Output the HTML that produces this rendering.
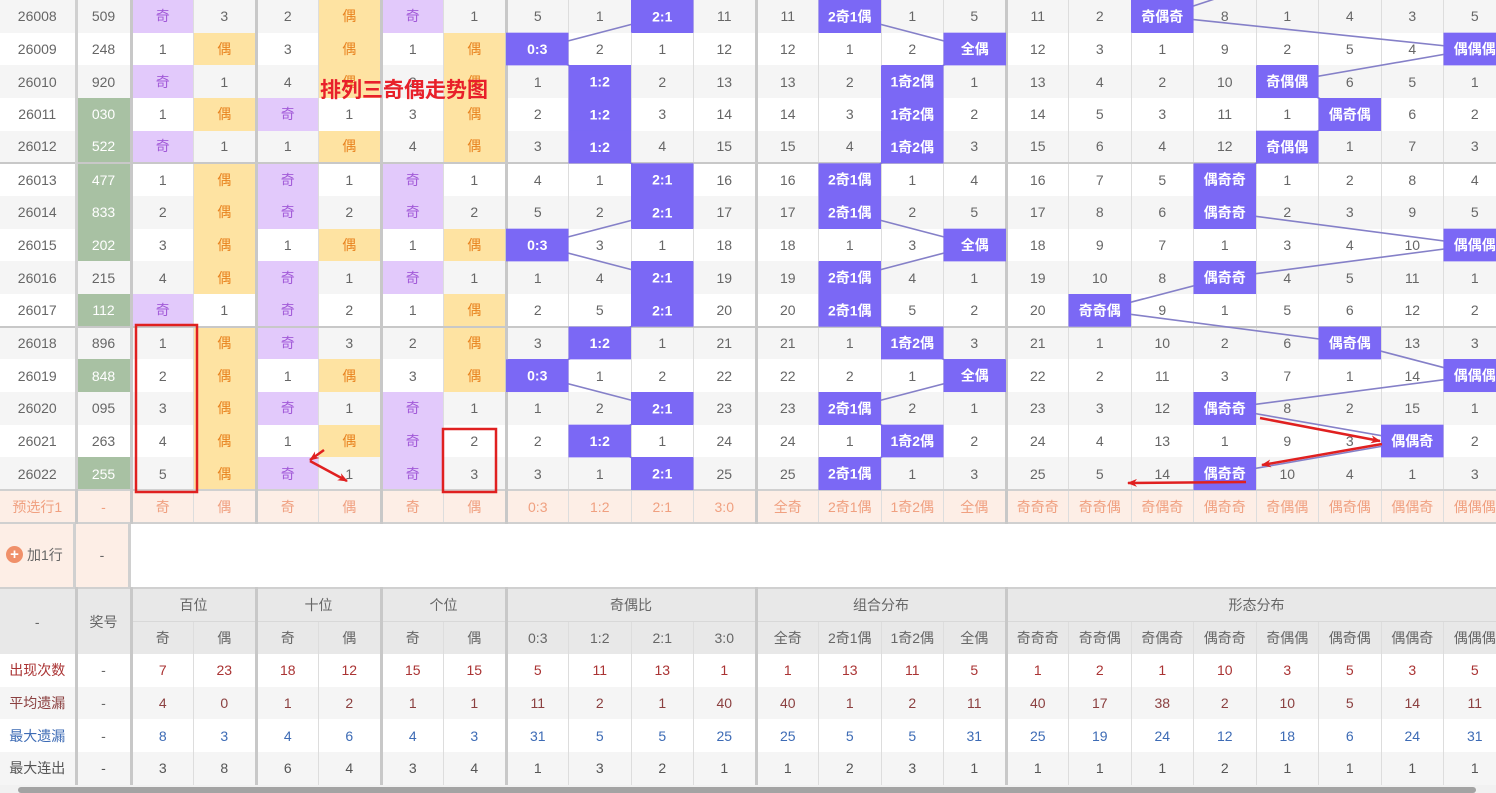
<!DOCTYPE html>
<html><head><meta charset="utf-8">
<style>
*{margin:0;padding:0;box-sizing:border-box}
body{width:1496px;height:793px;overflow:hidden;background:#fff;font-family:"Liberation Sans","Noto Sans CJK SC",sans-serif;position:relative}
table{border-collapse:collapse;table-layout:fixed;width:1506px;position:absolute;left:0}
td{text-align:center;font-size:14px;color:#666;border-right:1px solid #ddd;overflow:hidden;white-space:nowrap;padding:0}
#m tr{height:32.67px}
#m tr:nth-child(odd) td{background:#f5f5f5}
#m tr:nth-child(even) td{background:#fff}
#m td:nth-child(1),#m td:nth-child(2){border-right:3px solid #c8c8c8}
#m td:nth-child(1){border-right:3px solid #d0d0d0}
#m td:nth-child(4),#m td:nth-child(6),#m td:nth-child(8),#m td:nth-child(12),#m td:nth-child(16){border-right:3px solid #c8c8c8}
#m tr.s td{border-top:2px solid #c8c8c8}
#m td.q{background:#e2c9fb !important;color:#a25ad8}
#m td.o{background:#fee3a2 !important;color:#e8821e}
#m td.g{background:#a8c1a3 !important;color:#fff}
#m td.b{background:#7b68f5 !important}
.sep{border-right:3px solid #c8c8c8 !important}
#p tr{height:33px}
#p td{background:#fdeee6;color:#f0a080;border-top:2px solid #d0d0d0;border-bottom:2px solid #d0d0d0}
#h td{background:#e8e8e8;color:#666;height:33.5px;border-bottom:1px solid #d8d8d8}
#st tr{height:32.7px}
.r1 td{background:#fff;color:#a33}
.r2 td{background:#f5f5f5;color:#8b4040}
.r3 td{background:#fff;color:#3d6bb5}
.r4 td{background:#f5f5f5;color:#555}
</style></head><body>
<table id="m"><colgroup><col style="width:76px"><col style="width:55px"><col span="22" style="width:62.5px"></colgroup>
<tr><td>26008</td><td>509</td><td class="q">奇</td><td>3</td><td>2</td><td class="o">偶</td><td class="q">奇</td><td>1</td><td>5</td><td>1</td><td class="b"></td><td>11</td><td>11</td><td class="b"></td><td>1</td><td>5</td><td>11</td><td>2</td><td class="b"></td><td>8</td><td>1</td><td>4</td><td>3</td><td>5</td></tr>
<tr><td>26009</td><td>248</td><td>1</td><td class="o">偶</td><td>3</td><td class="o">偶</td><td>1</td><td class="o">偶</td><td class="b"></td><td>2</td><td>1</td><td>12</td><td>12</td><td>1</td><td>2</td><td class="b"></td><td>12</td><td>3</td><td>1</td><td>9</td><td>2</td><td>5</td><td>4</td><td class="b"></td></tr>
<tr><td>26010</td><td>920</td><td class="q">奇</td><td>1</td><td>4</td><td class="o">偶</td><td>2</td><td class="o">偶</td><td>1</td><td class="b"></td><td>2</td><td>13</td><td>13</td><td>2</td><td class="b"></td><td>1</td><td>13</td><td>4</td><td>2</td><td>10</td><td class="b"></td><td>6</td><td>5</td><td>1</td></tr>
<tr><td>26011</td><td class="g">030</td><td>1</td><td class="o">偶</td><td class="q">奇</td><td>1</td><td>3</td><td class="o">偶</td><td>2</td><td class="b"></td><td>3</td><td>14</td><td>14</td><td>3</td><td class="b"></td><td>2</td><td>14</td><td>5</td><td>3</td><td>11</td><td>1</td><td class="b"></td><td>6</td><td>2</td></tr>
<tr><td>26012</td><td class="g">522</td><td class="q">奇</td><td>1</td><td>1</td><td class="o">偶</td><td>4</td><td class="o">偶</td><td>3</td><td class="b"></td><td>4</td><td>15</td><td>15</td><td>4</td><td class="b"></td><td>3</td><td>15</td><td>6</td><td>4</td><td>12</td><td class="b"></td><td>1</td><td>7</td><td>3</td></tr>
<tr class="s"><td>26013</td><td class="g">477</td><td>1</td><td class="o">偶</td><td class="q">奇</td><td>1</td><td class="q">奇</td><td>1</td><td>4</td><td>1</td><td class="b"></td><td>16</td><td>16</td><td class="b"></td><td>1</td><td>4</td><td>16</td><td>7</td><td>5</td><td class="b"></td><td>1</td><td>2</td><td>8</td><td>4</td></tr>
<tr><td>26014</td><td class="g">833</td><td>2</td><td class="o">偶</td><td class="q">奇</td><td>2</td><td class="q">奇</td><td>2</td><td>5</td><td>2</td><td class="b"></td><td>17</td><td>17</td><td class="b"></td><td>2</td><td>5</td><td>17</td><td>8</td><td>6</td><td class="b"></td><td>2</td><td>3</td><td>9</td><td>5</td></tr>
<tr><td>26015</td><td class="g">202</td><td>3</td><td class="o">偶</td><td>1</td><td class="o">偶</td><td>1</td><td class="o">偶</td><td class="b"></td><td>3</td><td>1</td><td>18</td><td>18</td><td>1</td><td>3</td><td class="b"></td><td>18</td><td>9</td><td>7</td><td>1</td><td>3</td><td>4</td><td>10</td><td class="b"></td></tr>
<tr><td>26016</td><td>215</td><td>4</td><td class="o">偶</td><td class="q">奇</td><td>1</td><td class="q">奇</td><td>1</td><td>1</td><td>4</td><td class="b"></td><td>19</td><td>19</td><td class="b"></td><td>4</td><td>1</td><td>19</td><td>10</td><td>8</td><td class="b"></td><td>4</td><td>5</td><td>11</td><td>1</td></tr>
<tr><td>26017</td><td class="g">112</td><td class="q">奇</td><td>1</td><td class="q">奇</td><td>2</td><td>1</td><td class="o">偶</td><td>2</td><td>5</td><td class="b"></td><td>20</td><td>20</td><td class="b"></td><td>5</td><td>2</td><td>20</td><td class="b"></td><td>9</td><td>1</td><td>5</td><td>6</td><td>12</td><td>2</td></tr>
<tr class="s"><td>26018</td><td>896</td><td>1</td><td class="o">偶</td><td class="q">奇</td><td>3</td><td>2</td><td class="o">偶</td><td>3</td><td class="b"></td><td>1</td><td>21</td><td>21</td><td>1</td><td class="b"></td><td>3</td><td>21</td><td>1</td><td>10</td><td>2</td><td>6</td><td class="b"></td><td>13</td><td>3</td></tr>
<tr><td>26019</td><td class="g">848</td><td>2</td><td class="o">偶</td><td>1</td><td class="o">偶</td><td>3</td><td class="o">偶</td><td class="b"></td><td>1</td><td>2</td><td>22</td><td>22</td><td>2</td><td>1</td><td class="b"></td><td>22</td><td>2</td><td>11</td><td>3</td><td>7</td><td>1</td><td>14</td><td class="b"></td></tr>
<tr><td>26020</td><td>095</td><td>3</td><td class="o">偶</td><td class="q">奇</td><td>1</td><td class="q">奇</td><td>1</td><td>1</td><td>2</td><td class="b"></td><td>23</td><td>23</td><td class="b"></td><td>2</td><td>1</td><td>23</td><td>3</td><td>12</td><td class="b"></td><td>8</td><td>2</td><td>15</td><td>1</td></tr>
<tr><td>26021</td><td>263</td><td>4</td><td class="o">偶</td><td>1</td><td class="o">偶</td><td class="q">奇</td><td>2</td><td>2</td><td class="b"></td><td>1</td><td>24</td><td>24</td><td>1</td><td class="b"></td><td>2</td><td>24</td><td>4</td><td>13</td><td>1</td><td>9</td><td>3</td><td class="b"></td><td>2</td></tr>
<tr><td>26022</td><td class="g">255</td><td>5</td><td class="o">偶</td><td class="q">奇</td><td>1</td><td class="q">奇</td><td>3</td><td>3</td><td>1</td><td class="b"></td><td>25</td><td>25</td><td class="b"></td><td>1</td><td>3</td><td>25</td><td>5</td><td>14</td><td class="b"></td><td>10</td><td>4</td><td>1</td><td>3</td></tr>
</table>

<table id="p" style="top:489px"><colgroup><col style="width:76px"><col style="width:55px"><col span="22" style="width:62.5px"></colgroup>
<tr><td class="sep">预选行1</td><td class="sep">-</td><td>奇</td><td class="sep">偶</td><td>奇</td><td class="sep">偶</td><td>奇</td><td class="sep">偶</td><td>0:3</td><td>1:2</td><td>2:1</td><td class="sep">3:0</td><td>全奇</td><td>2奇1偶</td><td>1奇2偶</td><td class="sep">全偶</td><td>奇奇奇</td><td>奇奇偶</td><td>奇偶奇</td><td>偶奇奇</td><td>奇偶偶</td><td>偶奇偶</td><td>偶偶奇</td><td>偶偶偶</td></tr>
</table>

<div style="position:absolute;left:0;top:524px;width:76px;height:63px;background:#fdeee6;border-right:3px solid #d0d0d0;font-size:14px;color:#666;line-height:63px">
<span style="display:inline-block;width:17px;height:17px;border-radius:50%;background:#f0906a;color:#fff;font-size:15px;line-height:17px;text-align:center;font-weight:bold;vertical-align:middle;margin:-3px 4px 0 6px">+</span>加1行</div>
<div style="position:absolute;left:76px;top:524px;width:55px;height:63px;background:#fdeee6;border-right:3px solid #d0d0d0;font-size:14px;color:#666;line-height:63px;text-align:center">-</div>

<table id="h" style="top:587px;border-top:2px solid #d0d0d0"><colgroup><col style="width:76px"><col style="width:55px"><col span="22" style="width:62.5px"></colgroup>
<tr><td rowspan="2" class="sep">-</td><td rowspan="2" class="sep">奖号</td><td colspan="2" class="sep">百位</td><td colspan="2" class="sep">十位</td><td colspan="2" class="sep">个位</td><td colspan="4" class="sep">奇偶比</td><td colspan="4" class="sep">组合分布</td><td colspan="8">形态分布</td></tr>
<tr><td>奇</td><td class="sep">偶</td><td>奇</td><td class="sep">偶</td><td>奇</td><td class="sep">偶</td><td>0:3</td><td>1:2</td><td>2:1</td><td class="sep">3:0</td><td>全奇</td><td>2奇1偶</td><td>1奇2偶</td><td class="sep">全偶</td><td>奇奇奇</td><td>奇奇偶</td><td>奇偶奇</td><td>偶奇奇</td><td>奇偶偶</td><td>偶奇偶</td><td>偶偶奇</td><td>偶偶偶</td></tr>
</table>

<table id="st" style="top:654px"><colgroup><col style="width:76px"><col style="width:55px"><col span="22" style="width:62.5px"></colgroup>
<tr class="r1"><td class="sep">出现次数</td><td class="sep" style="color:#666">-</td><td>7</td><td class="sep">23</td><td>18</td><td class="sep">12</td><td>15</td><td class="sep">15</td><td>5</td><td>11</td><td>13</td><td class="sep">1</td><td>1</td><td>13</td><td>11</td><td class="sep">5</td><td>1</td><td>2</td><td>1</td><td>10</td><td>3</td><td>5</td><td>3</td><td>5</td></tr>
<tr class="r2"><td class="sep">平均遗漏</td><td class="sep" style="color:#666">-</td><td>4</td><td class="sep">0</td><td>1</td><td class="sep">2</td><td>1</td><td class="sep">1</td><td>11</td><td>2</td><td>1</td><td class="sep">40</td><td>40</td><td>1</td><td>2</td><td class="sep">11</td><td>40</td><td>17</td><td>38</td><td>2</td><td>10</td><td>5</td><td>14</td><td>11</td></tr>
<tr class="r3"><td class="sep">最大遗漏</td><td class="sep" style="color:#666">-</td><td>8</td><td class="sep">3</td><td>4</td><td class="sep">6</td><td>4</td><td class="sep">3</td><td>31</td><td>5</td><td>5</td><td class="sep">25</td><td>25</td><td>5</td><td>5</td><td class="sep">31</td><td>25</td><td>19</td><td>24</td><td>12</td><td>18</td><td>6</td><td>24</td><td>31</td></tr>
<tr class="r4"><td class="sep">最大连出</td><td class="sep">-</td><td>3</td><td class="sep">8</td><td>6</td><td class="sep">4</td><td>3</td><td class="sep">4</td><td>1</td><td>3</td><td>2</td><td class="sep">1</td><td>1</td><td>2</td><td>3</td><td class="sep">1</td><td>1</td><td>1</td><td>1</td><td>2</td><td>1</td><td>1</td><td>1</td><td>1</td></tr>
</table>

<div style="position:absolute;left:0;top:785px;width:1496px;height:8px;background:#f1f1f1"></div>
<div style="position:absolute;left:18px;top:787px;width:1458px;height:6px;background:#a3a3a3;border-radius:3px"></div>

<svg width="1496" height="793" style="position:absolute;left:0;top:0" font-family="Liberation Sans, Noto Sans CJK SC, sans-serif">
<defs><marker id="ar" markerWidth="10" markerHeight="8" refX="9" refY="4" orient="auto" markerUnits="userSpaceOnUse"><path d="M0,0 L10,4 L0,8 L3,4z" fill="#e02020"/></marker></defs>
<g fill="none" stroke="#8580c8" stroke-width="1.6">
<polyline points="662.25,16.3 537.25,49 599.75,81.6 599.75,114.3 599.75,147 662.25,179.6 662.25,212.3 537.25,245 662.25,277.7 662.25,310.3 599.75,343 537.25,375.7 662.25,408.3 599.75,441 662.25,473.7"/>
<polyline points="849.75,16.3 974.75,49 912.25,81.6 912.25,114.3 912.25,147 849.75,179.6 849.75,212.3 974.75,245 849.75,277.7 849.75,310.3 912.25,343 974.75,375.7 849.75,408.3 912.25,441 849.75,473.7"/>
<polyline points="1260,-16 1162.25,16.3 1474.75,49 1287.25,81.6 1349.75,114.3 1287.25,147 1224.75,179.6 1224.75,212.3 1474.75,245 1224.75,277.7 1099.75,310.3 1349.75,343 1474.75,375.7 1224.75,408.3 1412.25,441 1224.75,473.7"/>
</g>
<g fill="#7b68f5">
<rect x="631" y="0" width="62.5" height="32.7"/><rect x="506" y="32.67" width="62.5" height="32.7"/><rect x="568.5" y="65.33" width="62.5" height="32.7"/><rect x="568.5" y="98" width="62.5" height="32.7"/><rect x="568.5" y="130.67" width="62.5" height="32.7"/><rect x="631" y="163.33" width="62.5" height="32.7"/><rect x="631" y="196" width="62.5" height="32.7"/><rect x="506" y="228.67" width="62.5" height="32.7"/><rect x="631" y="261.33" width="62.5" height="32.7"/><rect x="631" y="294" width="62.5" height="32.7"/><rect x="568.5" y="326.67" width="62.5" height="32.7"/><rect x="506" y="359.33" width="62.5" height="32.7"/><rect x="631" y="392" width="62.5" height="32.7"/><rect x="568.5" y="424.67" width="62.5" height="32.7"/><rect x="631" y="457.33" width="62.5" height="32.7"/>
<rect x="818.5" y="0" width="62.5" height="32.7"/><rect x="943.5" y="32.67" width="62.5" height="32.7"/><rect x="881" y="65.33" width="62.5" height="32.7"/><rect x="881" y="98" width="62.5" height="32.7"/><rect x="881" y="130.67" width="62.5" height="32.7"/><rect x="818.5" y="163.33" width="62.5" height="32.7"/><rect x="818.5" y="196" width="62.5" height="32.7"/><rect x="943.5" y="228.67" width="62.5" height="32.7"/><rect x="818.5" y="261.33" width="62.5" height="32.7"/><rect x="818.5" y="294" width="62.5" height="32.7"/><rect x="881" y="326.67" width="62.5" height="32.7"/><rect x="943.5" y="359.33" width="62.5" height="32.7"/><rect x="818.5" y="392" width="62.5" height="32.7"/><rect x="881" y="424.67" width="62.5" height="32.7"/><rect x="818.5" y="457.33" width="62.5" height="32.7"/>
<rect x="1131" y="0" width="62.5" height="32.7"/><rect x="1443.5" y="32.67" width="62.5" height="32.7"/><rect x="1256" y="65.33" width="62.5" height="32.7"/><rect x="1318.5" y="98" width="62.5" height="32.7"/><rect x="1256" y="130.67" width="62.5" height="32.7"/><rect x="1193.5" y="163.33" width="62.5" height="32.7"/><rect x="1193.5" y="196" width="62.5" height="32.7"/><rect x="1443.5" y="228.67" width="62.5" height="32.7"/><rect x="1193.5" y="261.33" width="62.5" height="32.7"/><rect x="1068.5" y="294" width="62.5" height="32.7"/><rect x="1318.5" y="326.67" width="62.5" height="32.7"/><rect x="1443.5" y="359.33" width="62.5" height="32.7"/><rect x="1193.5" y="392" width="62.5" height="32.7"/><rect x="1381" y="424.67" width="62.5" height="32.7"/><rect x="1193.5" y="457.33" width="62.5" height="32.7"/>
</g>
<g fill="#fff" font-size="14" font-weight="bold" text-anchor="middle">
<text x="662.25" y="21.3">2:1</text><text x="537.25" y="54">0:3</text><text x="599.75" y="86.6">1:2</text><text x="599.75" y="119.3">1:2</text><text x="599.75" y="152">1:2</text><text x="662.25" y="184.6">2:1</text><text x="662.25" y="217.3">2:1</text><text x="537.25" y="250">0:3</text><text x="662.25" y="282.7">2:1</text><text x="662.25" y="315.3">2:1</text><text x="599.75" y="348">1:2</text><text x="537.25" y="380.7">0:3</text><text x="662.25" y="413.3">2:1</text><text x="599.75" y="446">1:2</text><text x="662.25" y="478.7">2:1</text>
<text x="849.75" y="21.3">2奇1偶</text><text x="974.75" y="54">全偶</text><text x="912.25" y="86.6">1奇2偶</text><text x="912.25" y="119.3">1奇2偶</text><text x="912.25" y="152">1奇2偶</text><text x="849.75" y="184.6">2奇1偶</text><text x="849.75" y="217.3">2奇1偶</text><text x="974.75" y="250">全偶</text><text x="849.75" y="282.7">2奇1偶</text><text x="849.75" y="315.3">2奇1偶</text><text x="912.25" y="348">1奇2偶</text><text x="974.75" y="380.7">全偶</text><text x="849.75" y="413.3">2奇1偶</text><text x="912.25" y="446">1奇2偶</text><text x="849.75" y="478.7">2奇1偶</text>
<text x="1162.25" y="21.3">奇偶奇</text><text x="1474.75" y="54">偶偶偶</text><text x="1287.25" y="86.6">奇偶偶</text><text x="1349.75" y="119.3">偶奇偶</text><text x="1287.25" y="152">奇偶偶</text><text x="1224.75" y="184.6">偶奇奇</text><text x="1224.75" y="217.3">偶奇奇</text><text x="1474.75" y="250">偶偶偶</text><text x="1224.75" y="282.7">偶奇奇</text><text x="1099.75" y="315.3">奇奇偶</text><text x="1349.75" y="348">偶奇偶</text><text x="1474.75" y="380.7">偶偶偶</text><text x="1224.75" y="413.3">偶奇奇</text><text x="1412.25" y="446">偶偶奇</text><text x="1224.75" y="478.7">偶奇奇</text>
</g>
<text x="320" y="97" font-size="21" font-weight="bold" fill="#e8202a" font-family="Noto Sans CJK SC, sans-serif">排列三奇偶走势图</text>
<g fill="none" stroke="#e02020" stroke-width="2.5">
<rect x="136" y="325" width="61" height="167"/>
<rect x="443" y="429" width="53" height="63"/>
</g>
<g stroke="#e02020" stroke-width="2.5" fill="none">
<line x1="324" y1="450" x2="310" y2="460" marker-end="url(#ar)"/>
<line x1="310" y1="461" x2="347" y2="481" marker-end="url(#ar)"/>
<line x1="1260" y1="418" x2="1380" y2="441" marker-end="url(#ar)"/>
<line x1="1382" y1="444" x2="1262" y2="465" marker-end="url(#ar)"/>
<line x1="1246" y1="482" x2="1128" y2="483" marker-end="url(#ar)"/>
</g>
</svg>
</body></html>
